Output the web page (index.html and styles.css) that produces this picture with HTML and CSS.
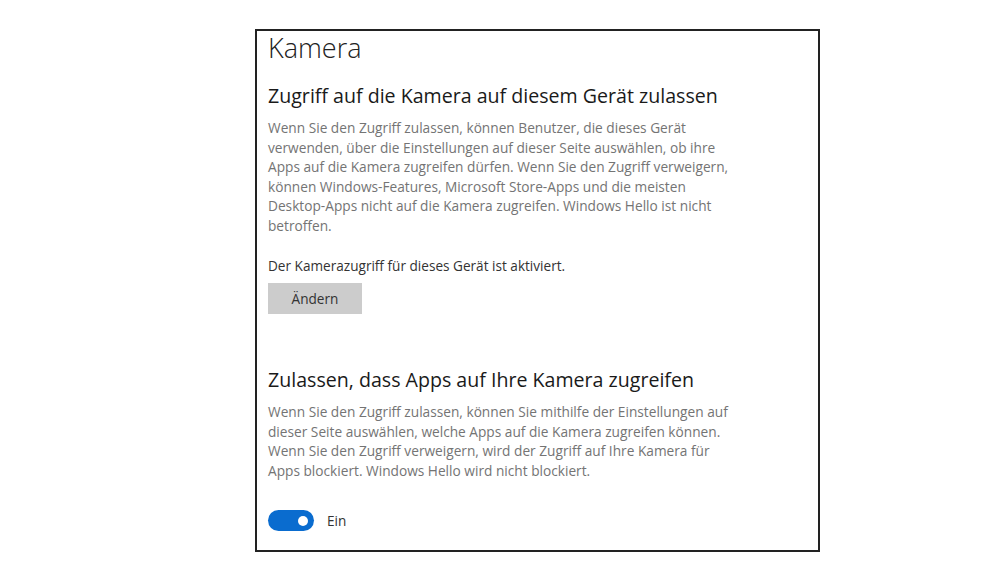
FILE: index.html
```html
<!DOCTYPE html>
<html lang="de">
<head>
    <meta charset="UTF-8">
    <meta name="viewport" content="width=device-width, initial-scale=1.0">
    <title>Kamera - Einstellungen</title>
    <link rel="stylesheet" href="styles.css">
</head>
<body>
    <div class="panel">
        <h1 class="page-title">Kamera</h1>

        <section class="group">
            <h2>Zugriff auf die Kamera auf diesem Gerät zulassen</h2>
            <p class="desc">Wenn Sie den Zugriff zulassen, können Benutzer, die dieses Gerät<br>verwenden, über die Einstellungen auf dieser Seite auswählen, ob ihre<br>Apps auf die Kamera zugreifen dürfen. Wenn Sie den Zugriff verweigern,<br>können Windows-Features, Microsoft Store-Apps und die meisten<br>Desktop-Apps nicht auf die Kamera zugreifen. Windows Hello ist nicht<br>betroffen.</p>
            <p class="status">Der Kamerazugriff für dieses Gerät ist aktiviert.</p>
            <button class="btn" type="button">Ändern</button>
        </section>

        <section class="group second">
            <h2>Zulassen, dass Apps auf Ihre Kamera zugreifen</h2>
            <p class="desc">Wenn Sie den Zugriff zulassen, können Sie mithilfe der Einstellungen auf<br>dieser Seite auswählen, welche Apps auf die Kamera zugreifen können.<br>Wenn Sie den Zugriff verweigern, wird der Zugriff auf Ihre Kamera für<br>Apps blockiert. Windows Hello wird nicht blockiert.</p>
            <div class="toggle-row">
                <span class="toggle"><span class="knob"></span></span>
                <span class="toggle-label">Ein</span>
            </div>
        </section>
    </div>
</body>
</html>
```

FILE: styles.css
```css
body {
    margin: 0;
    background: #fff;
    color: #1f1f1f;
    font-family: 'Open Sans', 'Noto Sans', sans-serif;
}

.panel {
    box-sizing: border-box;
    width: 565px;
    height: 523px;
    margin: 29px 0 0 255px;
    padding: 0 11px;
    border: 2px solid #222;
}

.page-title {
    margin: 0;
    font-size: 27px;
    font-weight: 300;
    line-height: 34px;
    color: #222;
}

.group h2 {
    margin: 0;
    font-size: 19.6px;
    font-weight: 400;
    line-height: 26px;
    color: #1a1a1a;
}

.group {
    padding-top: 18px;
}

.desc {
    margin: 9px 0 0;
    font-size: 13.7px;
    line-height: 19.5px;
    color: #747474;
}

.status {
    margin: 21px 0 0;
    font-size: 13.6px;
    line-height: 20px;
    color: #333;
}

.btn {
    display: block;
    margin-top: 7px;
    width: 94px;
    height: 31px;
    border: none;
    background: #cccccc;
    color: #333;
    font-family: inherit;
    font-size: 13.6px;
    padding: 0;
}

.second {
    padding-top: 53px;
}

.toggle-row {
    display: flex;
    align-items: center;
    gap: 13px;
    margin-top: 30px;
}

.toggle {
    display: flex;
    align-items: center;
    justify-content: flex-end;
    box-sizing: border-box;
    width: 46px;
    height: 21px;
    padding-right: 6px;
    border-radius: 11px;
    background: #0a6ccf;
}

.knob {
    width: 10px;
    height: 10px;
    border-radius: 50%;
    background: #fff;
}

.toggle-label {
    font-size: 13.6px;
    color: #333;
}
```
